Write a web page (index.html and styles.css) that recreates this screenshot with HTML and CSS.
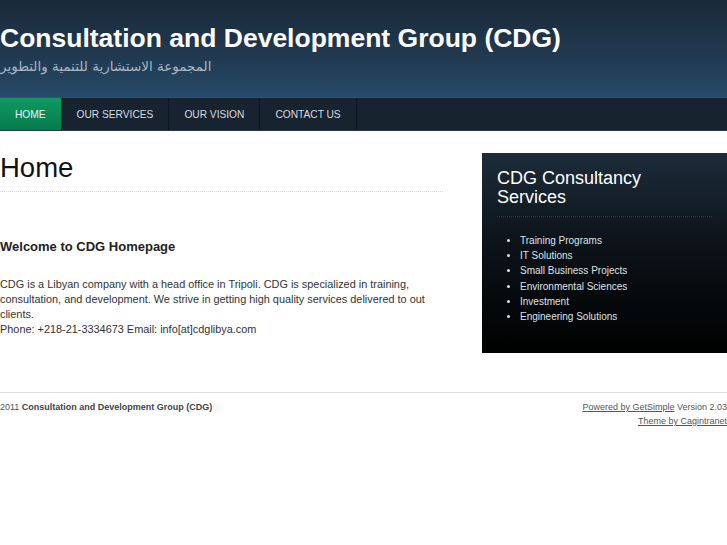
FILE: index.html
```html
<!DOCTYPE html>
<html>
<head>
<meta charset="utf-8">
<link rel="stylesheet" href="styles.css">
</head>
<body>
<div class="header">
  <h1 class="site-title">Consultation and Development Group (CDG)</h1>
  <div class="site-sub" dir="rtl">المجموعة الاستشارية للتنمية والتطوير</div>
</div>
<div class="nav">
  <a class="tab active">HOME</a>
  <a class="tab">OUR SERVICES</a>
  <a class="tab">OUR VISION</a>
  <a class="tab">CONTACT US</a>
</div>
<div class="main">
  <div class="content">
    <h2 class="page-title">Home</h2>
    <h3 class="welcome">Welcome to CDG Homepage</h3>
    <p class="body-text">CDG is a Libyan company with a head office in Tripoli. CDG is specialized in training, consultation, and development. We strive in getting high quality services delivered to out clients.<br>Phone: +218-21-3334673 Email: info[at]cdglibya.com</p>
  </div>
  <div class="sidebar">
    <h2 class="side-title">CDG Consultancy Services</h2>
    <ul class="side-list">
      <li>Training Programs</li>
      <li>IT Solutions</li>
      <li>Small Business Projects</li>
      <li>Environmental Sciences</li>
      <li>Investment</li>
      <li>Engineering Solutions</li>
    </ul>
  </div>
</div>
<div class="footer">
  <div class="foot-left">2011 <b>Consultation and Development Group (CDG)</b></div>
  <div class="foot-right"><a>Powered by GetSimple</a> Version 2.03<br><a>Theme by Cagintranet</a></div>
</div>
</body>
</html>
```
FILE: styles.css
```css
html, body { margin: 0; padding: 0; background: #fff; }
body { font-family: "Liberation Sans", Arial, sans-serif; color: #333; }

.header {
  height: 98px;
  background: linear-gradient(to bottom, #1a2939 0%, #213a52 60%, #264b68 100%);
  border-bottom: 1px solid #2f5575;
  box-sizing: border-box;
  padding-top: 23px;
}
.site-title {
  margin: 0;
  font-size: 26.5px;
  line-height: 30px;
  font-weight: bold;
  color: #fff;
}
.site-sub {
  text-align: left;
  direction: rtl;
  display: inline-block;
  margin-top: 5px;
  font-family: "DejaVu Sans", sans-serif;
  font-size: 13.5px;
  color: #a9b5c2;
}

.nav {
  height: 32px;
  background: #17232f;
  display: flex;
  border-bottom: 1px solid #263848;
}
.tab {
  display: flex;
  align-items: center;
  padding: 0 15px;
  font-size: 10.2px;
  color: #d5dbe1;
  border-right: 1px solid #0f1820;
}
.tab.active {
  background: linear-gradient(to bottom, #0f9a62, #087a4c);
  color: #e8f4ee;
  padding: 0 15px 0 15px;
}

.main {
  display: flex;
  justify-content: space-between;
  padding-top: 22px;
}
.content { width: 443px; }
.page-title {
  margin: 0;
  font-size: 27.5px;
  font-weight: normal;
  line-height: 30px;
  color: #111;
  padding-bottom: 8px;
  border-bottom: 1px dotted #d8d8d8;
}
.welcome {
  margin: 47px 0 0;
  font-size: 13px;
  line-height: 16px;
  color: #222;
}
.body-text {
  margin: 22px 0 0;
  font-size: 10.9px;
  line-height: 15px;
  color: #333;
}

.sidebar {
  width: 245px;
  height: 200px;
  box-sizing: border-box;
  background: linear-gradient(to bottom, #1d2c3a 0%, #0c1319 45%, #000 100%);
  padding: 16px 15px 0 15px;
}
.side-title {
  margin: 0;
  font-size: 18px;
  line-height: 19px;
  font-weight: normal;
  color: #fff;
  padding-bottom: 9px;
  border-bottom: 1px dotted #2c3640;
}
.side-list {
  margin: 16px 0 0;
  padding: 0 0 0 23px;
  font-size: 10px;
  line-height: 15.2px;
  color: #dde2e6;
}

.footer {
  margin-top: 39px;
  border-top: 1px solid #dddddd;
  display: flex;
  justify-content: space-between;
  padding-top: 7px;
  font-size: 9px;
  line-height: 14px;
  color: #555;
}
.foot-left b { color: #444; }
.foot-right { text-align: right; }
.foot-right a { text-decoration: underline; color: #555; }
```
